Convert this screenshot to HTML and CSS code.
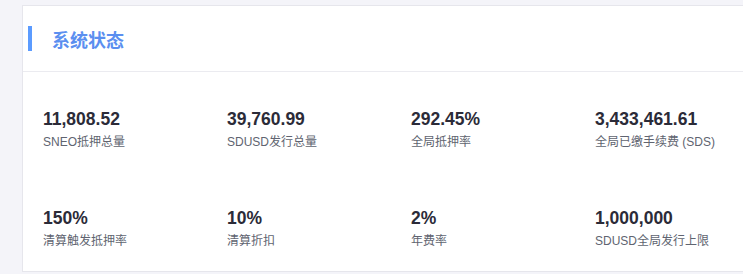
FILE: index.html
```html
<!DOCTYPE html>
<html lang="zh-CN">
<head>
<meta charset="utf-8">
<link rel="stylesheet" href="styles.css">
</head>
<body>
<div class="card">
  <div class="card-header">
    <span class="accent"></span>
    <h2 class="title">系统状态</h2>
  </div>
  <div class="stats">
    <div class="stat"><div class="value">11,808.52</div><div class="label">SNEO抵押总量</div></div>
    <div class="stat"><div class="value">39,760.99</div><div class="label">SDUSD发行总量</div></div>
    <div class="stat"><div class="value">292.45%</div><div class="label">全局抵押率</div></div>
    <div class="stat"><div class="value">3,433,461.61</div><div class="label">全局已缴手续费 (SDS)</div></div>
    <div class="stat"><div class="value">150%</div><div class="label">清算触发抵押率</div></div>
    <div class="stat"><div class="value">10%</div><div class="label">清算折扣</div></div>
    <div class="stat"><div class="value">2%</div><div class="label">年费率</div></div>
    <div class="stat"><div class="value">1,000,000</div><div class="label">SDUSD全局发行上限</div></div>
  </div>
</div>
</body>
</html>
```
FILE: styles.css
```css
html, body {
  margin: 0;
  padding: 0;
}
body {
  background: #f4f4f9;
  overflow: hidden;
  font-family: "Liberation Sans", "Noto Sans CJK SC", sans-serif;
  height: 274px;
}
.card {
  margin: 5px 0 0 22px;
  width: 780px;
  background: #ffffff;
  border: 1px solid #e6e6ec;
  box-sizing: border-box;
}
.card-header {
  height: 65px;
  border-bottom: 1px solid #ebebf0;
  display: flex;
  align-items: center;
  padding-left: 5px;
}
.accent {
  width: 4px;
  height: 25px;
  background: #5b9bff;
}
.title {
  margin: 0 0 0 20px;
  font-family: "Noto Sans CJK SC", sans-serif;
  font-size: 18px;
  font-weight: 700;
  color: #5b8ff0;
  line-height: 24px;
}
.stats {
  display: grid;
  grid-template-columns: repeat(4, 184px);
  row-gap: 58px;
  padding: 37px 0 22px 20px;
}
.value {
  font-size: 17.5px;
  font-weight: 700;
  color: #2b2b38;
  line-height: 20px;
}
.label {
  margin-top: 5px;
  font-size: 12px;
  line-height: 16px;
  color: #606470;
}
```
